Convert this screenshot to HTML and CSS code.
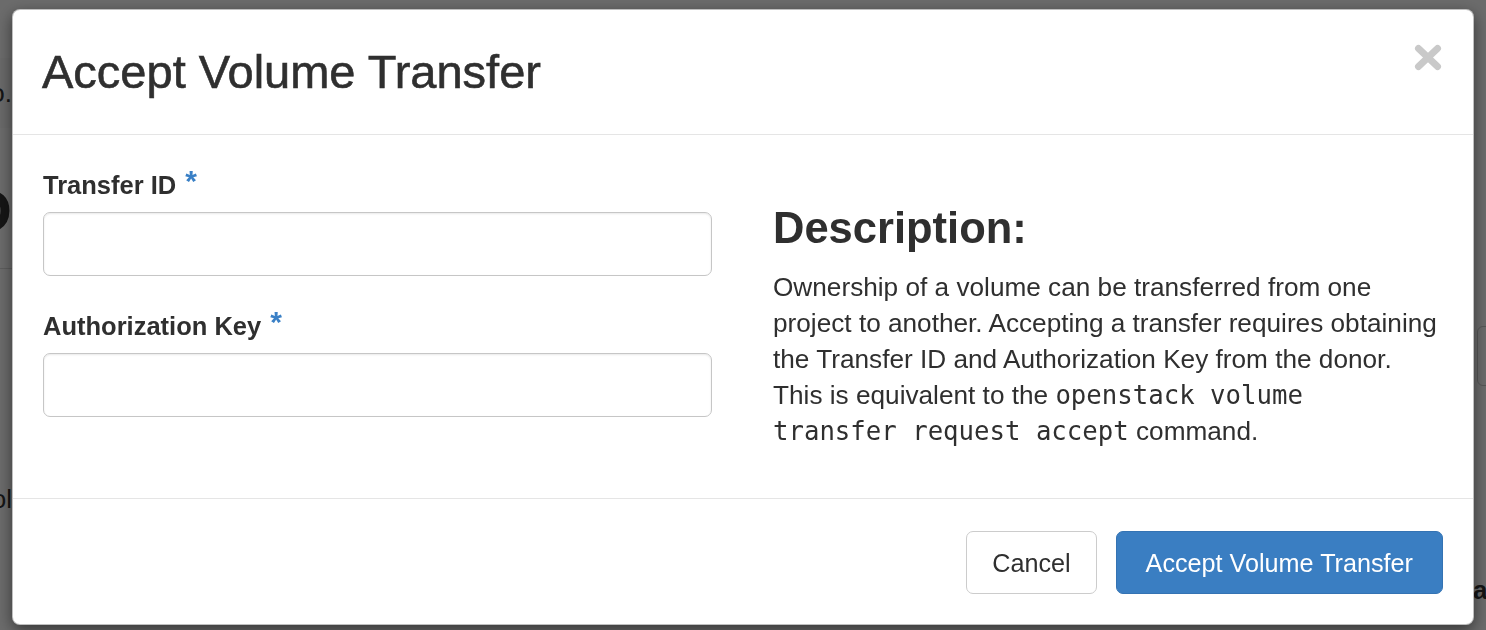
FILE: index.html
```html
<!DOCTYPE html>
<html lang="en">
<head>
<meta charset="utf-8">
<title>Accept Volume Transfer</title>
<link rel="stylesheet" href="styles.css">
</head>
<body>
  <div class="page">
    <div class="edge edge-left">
      <div class="page-band"><span class="page-text">Info.</span></div>
      <div class="page-heading">D</div>
      <div class="page-rule"></div>
      <div class="page-text page-text-low">Vol</div>
    </div>
    <div class="edge edge-right">
      <div class="page-box"></div>
      <div class="page-bold">able</div>
    </div>
  </div>

  <div class="backdrop"></div>

  <div class="modal-layer">
    <div class="modal" role="dialog">
      <div class="modal-header">
        <h3 class="modal-title">Accept Volume Transfer</h3>
        <button class="close" type="button" aria-label="Close">
          <svg width="28" height="27" viewBox="0 0 28 27"><path d="M4.5 4.5 L23.5 22.5 M23.5 4.5 L4.5 22.5" stroke="#c9c9c9" stroke-width="7" stroke-linecap="round" fill="none"/></svg>
        </button>
      </div>
      <div class="modal-body">
        <div class="form-col">
          <div class="form-group">
            <label class="control-label required" for="transfer_id">Transfer ID</label>
            <input class="form-control" id="transfer_id" type="text">
          </div>
          <div class="form-group">
            <label class="control-label required" for="auth_key">Authorization Key</label>
            <input class="form-control" id="auth_key" type="text">
          </div>
        </div>
        <div class="help-col">
          <h3 class="help-title">Description:</h3>
          <p class="help-text">Ownership of a volume can be transferred from one<br>project to another. Accepting a transfer requires obtaining<br>the Transfer ID and Authorization Key from the donor.<br>This is equivalent to the <code>openstack volume<br>transfer request accept</code> command.</p>
        </div>
      </div>
      <div class="modal-footer">
        <button class="btn btn-default btn-cancel" type="button">Cancel</button>
        <button class="btn btn-primary btn-accept" type="submit">Accept Volume Transfer</button>
      </div>
    </div>
  </div>
</body>
</html>
```

FILE: styles.css
```css
html, body {
  margin: 0;
  padding: 0;
}

body {
  width: 1486px;
  height: 630px;
  overflow: hidden;
  font-family: "Liberation Sans", Arial, Helvetica, sans-serif;
  color: #333;
}

/* underlying page (mostly hidden) */
.page {
  height: 630px;
  background: #fff;
  display: flex;
  justify-content: space-between;
}

.edge {
  overflow: hidden;
  height: 630px;
}

.edge-left {
  width: 12px;
  display: flex;
  flex-direction: column;
  align-items: flex-end;
}

.edge-right {
  width: 13px;
  display: flex;
  flex-direction: column;
}

.page-band {
  margin-top: 58px;
  height: 70px;
  width: 12px;
  display: flex;
  align-items: center;
  justify-content: flex-end;
  background: #fafafa;
}

.page-text {
  font-size: 26px;
  line-height: 36px;
  color: #333;
  white-space: nowrap;
}

.page-heading {
  margin-top: 48px;
  font-size: 62px;
  line-height: 70px;
  font-weight: bold;
  color: #333;
  white-space: nowrap;
}

.page-rule {
  margin-top: 22px;
  width: 12px;
  border-top: 1px solid #ddd;
}

.page-text-low {
  margin-top: 212px;
}

.page-box {
  margin-top: 326px;
  margin-left: 4px;
  width: 40px;
  height: 58px;
  border: 1px solid #ccc;
  border-radius: 6px;
}

.page-bold {
  margin-top: 186px;
  font-size: 26px;
  line-height: 36px;
  font-weight: bold;
  color: #333;
  white-space: nowrap;
}

.backdrop {
  position: fixed;
  inset: 0;
  background: rgba(0, 0, 0, 0.58);
}

/* modal */
.modal-layer {
  position: fixed;
  inset: 0;
  padding: 9px 0 0 12px;
}

.modal {
  box-sizing: border-box;
  width: 1462px;
  height: 616px;
  background: #fff;
  border: 1px solid rgba(0, 0, 0, 0.25);
  border-radius: 8px;
  box-shadow: 0 5px 15px rgba(0, 0, 0, 0.5);
  display: flex;
  flex-direction: column;
  overflow: hidden;
}

.modal-header {
  padding: 36px 31px 36px 29px;
  border-bottom: 1px solid #e5e5e5;
  display: flex;
  justify-content: space-between;
  align-items: flex-start;
}

.modal-title {
  margin: 0;
  font-size: 47px;
  line-height: 52px;
  font-weight: normal;
  color: #2f2f2f;
  -webkit-text-stroke: 0.6px #2f2f2f;
}

.close {
  margin-top: -2px;
  padding: 0;
  border: 0;
  background: transparent;
  line-height: 0;
  cursor: pointer;
}

.modal-body {
  flex: 1;
  padding: 32px 29px 0 30px;
  display: grid;
  grid-template-columns: 669px 670px;
  column-gap: 61px;
  align-items: start;
}

.form-group {
  margin-bottom: 32px;
}

.control-label {
  display: block;
  height: 36px;
  font-size: 25.5px;
  line-height: 36px;
  font-weight: bold;
  color: #2f2f2f;
  margin-bottom: 9px;
}

.required::after {
  content: "*";
  padding-left: 9px;
  color: #3a80c6;
  font-size: 30px;
  font-weight: bold;
  line-height: 0;
  vertical-align: 3px;
}

.form-control {
  display: block;
  box-sizing: border-box;
  width: 100%;
  height: 64px;
  margin: 0;
  padding: 10px 21px;
  font-family: inherit;
  font-size: 25px;
  color: #555;
  background: #fff;
  border: 1px solid #c6c6c6;
  border-radius: 7px;
  box-shadow: inset 0 1px 2px rgba(0, 0, 0, 0.09);
  outline: none;
}

.help-title {
  margin: 37px 0 17px;
  font-size: 43.5px;
  line-height: 48px;
  font-weight: bold;
  color: #2f2f2f;
}

.help-text {
  margin: 0;
  font-size: 26.2px;
  line-height: 36px;
  color: #2f2f2f;
  white-space: nowrap;
}

.help-text code {
  font-family: "DejaVu Sans Mono", "Liberation Mono", monospace;
  font-size: 25.7px;
  color: #2f2f2f;
}

.modal-footer {
  padding: 32px 30px 30px;
  border-top: 1px solid #e5e5e5;
  display: flex;
  justify-content: flex-end;
  gap: 19px;
}

.btn {
  box-sizing: border-box;
  height: 63px;
  margin: 0;
  padding: 0 26px;
  font-family: inherit;
  font-size: 25.2px;
  line-height: 36px;
  border: 1px solid transparent;
  border-radius: 7px;
  cursor: pointer;
}

.btn-cancel {
  padding: 0 25px;
}

.btn-accept {
  padding: 0 29px;
}

.btn-default {
  background: #fff;
  color: #2f2f2f;
  border-color: #ccc;
}

.btn-primary {
  background: #3a7ec2;
  color: #fff;
  border-color: #3473b3;
}
```
